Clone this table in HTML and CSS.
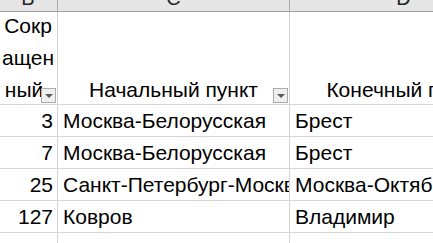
FILE: index.html
```html
<!DOCTYPE html>
<html lang="ru">
<head>
<meta charset="utf-8">
<title>Маршруты</title>
<link rel="stylesheet" href="styles.css">
</head>
<body>
<div class="sheet">
  <div class="col-head">B</div>
  <div class="col-head">C</div>
  <div class="col-head">D</div>

  <div class="cell title">
    <span class="lines">
      <span>Сокр</span>
      <span>ащен</span>
      <span class="last">ный</span>
    </span>
    <span class="filter"></span>
  </div>
  <div class="cell title"><span class="lines"><span>Начальный пункт</span></span><span class="filter"></span></div>
  <div class="cell title"><span class="lines"><span>Конечный пункт</span></span></div>

  <div class="cell num">3</div>
  <div class="cell">Москва-Белорусская</div>
  <div class="cell">Брест</div>

  <div class="cell num">7</div>
  <div class="cell">Москва-Белорусская</div>
  <div class="cell">Брест</div>

  <div class="cell num">25</div>
  <div class="cell">Санкт-Петербург-Москва</div>
  <div class="cell">Москва-Октябрьская</div>

  <div class="cell num">127</div>
  <div class="cell">Ковров</div>
  <div class="cell">Владимир</div>

  <div class="cell num"></div>
  <div class="cell"></div>
  <div class="cell"></div>
</div>
</body>
</html>
```

FILE: styles.css
```css
html, body {
  margin: 0;
  padding: 0;
  background: #ffffff;
  overflow: hidden;
}

.sheet {
  display: grid;
  grid-template-columns: 59px 232px 228px;
  grid-template-rows: 24px 93px repeat(5, 32px);
  margin: -12px 0 0 -1px;
  font-family: "Liberation Sans", Arial, sans-serif;
  font-size: 21px;
  color: #000000;
}

/* column letters strip */
.col-head {
  box-sizing: border-box;
  display: flex;
  align-items: flex-end;
  justify-content: center;
  padding-bottom: 1px;
  line-height: 24px;
  background: #e6e6e6;
  border-right: 1px solid #ababab;
  border-bottom: 1px solid #9e9e9e;
  color: #262626;
  font-size: 20px;
}

/* worksheet cells */
.cell {
  position: relative;
  box-sizing: border-box;
  display: flex;
  align-items: flex-end;
  padding: 0 4px 3px 5px;
  line-height: 24px;
  white-space: nowrap;
  overflow: hidden;
  border-right: 1px solid #d4d4d4;
  border-bottom: 1px solid #d4d4d4;
}

.cell.num {
  justify-content: flex-end;
  padding-right: 4px;
}

.cell.title {
  justify-content: center;
  padding: 0;
}

.lines {
  display: flex;
  flex-direction: column;
  align-items: center;
  line-height: 32px;
  margin-bottom: -2px;
}

.lines .last {
  margin-right: 8px;
}

/* autofilter drop-down button */
.filter {
  position: absolute;
  right: 1px;
  bottom: 1px;
  box-sizing: border-box;
  width: 15px;
  height: 15px;
  background: #efefef;
  border: 1px solid #ababab;
  display: flex;
  align-items: center;
  justify-content: center;
}

.filter::after {
  content: "";
  width: 0;
  height: 0;
  margin-top: 1px;
  border-left: 4px solid transparent;
  border-right: 4px solid transparent;
  border-top: 4px solid #5a5a5a;
}
```
